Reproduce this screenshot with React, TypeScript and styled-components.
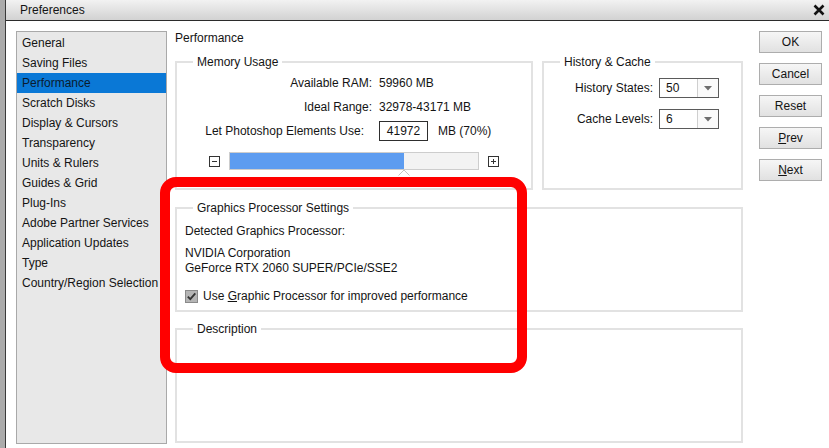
import React from "react";
import styled, { createGlobalStyle } from "styled-components";

const GlobalStyle = createGlobalStyle`
  html, body {
    margin: 0;
    padding: 0;
    background: #fff;
  }
  body {
    font-family: "Liberation Sans", Arial, sans-serif;
    font-size: 12px;
    color: #141414;
  }
  #root {
    width: 829px;
    height: 448px;
    overflow: hidden;
  }
`;

const Screen = styled.div`
  position: relative;
  display: flex;
  width: 829px;
  height: 448px;
  overflow: hidden;
`;

const WindowEdge = styled.div`
  flex: none;
  width: 5px;
  background: #ababab;
  border-right: 1px solid #3a3a3a;
`;

const Dialog = styled.div`
  flex: 1;
  display: flex;
  flex-direction: column;
  background: #fff;
`;

const TitleBar = styled.div`
  flex: none;
  height: 20px;
  display: flex;
  align-items: center;
  justify-content: space-between;
  padding: 0 4px 0 14px;
  background: linear-gradient(#f2f2f2, #d2d2d2);
  border-bottom: 1px solid #2b2b2b;
  line-height: 14px;
`;

const Body = styled.div`
  flex: 1;
  display: flex;
  align-items: flex-start;
  padding: 10px 0 0 10px;
`;

const CategoryList = styled.ul`
  flex: none;
  box-sizing: border-box;
  width: 151px;
  height: 413px;
  margin: 0 8px 0 0;
  padding: 1px 0 0;
  list-style: none;
  background: #e8e8e8;
  border: 1px solid #a9a9a9;
  overflow: hidden;
`;

const CategoryItem = styled.li<{ $active?: boolean }>`
  height: 20px;
  line-height: 20px;
  padding-left: 5px;
  white-space: nowrap;
  background: ${(p) => (p.$active ? "#0a78d6" : "transparent")};
  color: ${(p) => (p.$active ? "#0b1b2e" : "#141414")};
`;

const Content = styled.div`
  flex: none;
  width: 568px;
  margin-right: 16px;
  display: flex;
  flex-direction: column;
`;

const PageTitle = styled.div`
  line-height: 14px;
  height: 14px;
`;

const TopRow = styled.div`
  display: flex;
  gap: 9px;
  margin-top: 10px;
`;

const GroupBox = styled.fieldset<{ $width?: number; $height: number; $gap?: number }>`
  box-sizing: border-box;
  margin: ${(p) => p.$gap ?? 0}px 0 0;
  padding: 0;
  min-width: 0;
  width: ${(p) => (p.$width ? `${p.$width}px` : "100%")};
  height: ${(p) => p.$height}px;
  border: 2px solid #e2e2e2;
`;

const Legend = styled.legend`
  margin-left: 16px;
  padding: 0 4px;
  line-height: 14px;
`;

const MemoryInner = styled.div`
  padding-top: 4px;
`;

const InfoGrid = styled.div`
  display: grid;
  grid-template-columns: 195px 1fr;
  grid-auto-rows: 20px;
  column-gap: 7px;
  row-gap: 4px;
  align-items: center;
`;

const InfoLabel = styled.div<{ $inset?: number }>`
  text-align: right;
  padding-right: ${(p) => p.$inset ?? 0}px;
  white-space: nowrap;
`;

const InfoValue = styled.div`
  display: flex;
  align-items: center;
  gap: 10px;
  white-space: nowrap;
`;

const NumberBox = styled.div`
  box-sizing: border-box;
  width: 49px;
  height: 20px;
  line-height: 18px;
  text-align: center;
  border: 1px solid #2e2e2e;
  background: #fff;
`;

const SliderRow = styled.div`
  display: flex;
  align-items: center;
  justify-content: center;
  gap: 9px;
  margin-top: 11px;
`;

const SliderTrack = styled.div`
  position: relative;
  box-sizing: border-box;
  width: 250px;
  height: 18px;
  background: #f3f3f3;
  border: 1px solid #cdcdcd;
`;

const SliderFill = styled.div`
  height: 100%;
  background: #5d9cf0;
`;

const SliderCaret = styled.svg`
  position: absolute;
  top: 100%;
  margin-left: -6px;
`;

const HistoryInner = styled.div`
  display: grid;
  grid-template-columns: 109px 60px;
  grid-auto-rows: 20px;
  column-gap: 6px;
  row-gap: 11px;
  align-items: center;
  padding-top: 9px;
`;

const Dropdown = styled.div`
  box-sizing: border-box;
  display: flex;
  height: 20px;
  border: 1px solid #5a5a5a;
  background: #fff;
`;

const DropdownValue = styled.div`
  flex: 1;
  line-height: 18px;
  padding-left: 6px;
`;

const DropdownArrow = styled.div`
  width: 20px;
  display: flex;
  align-items: center;
  justify-content: center;
  border-left: 1px solid #cfcfcf;
  background: #fafafa;
`;

const GpuInner = styled.div`
  padding: 9px 8px 0;
`;

const GpuLine = styled.div`
  line-height: 14px;
`;

const GpuName = styled.div`
  margin-top: 8px;
  line-height: 15px;
`;

const CheckRow = styled.label`
  display: flex;
  align-items: center;
  gap: 5px;
  margin-top: 13px;
  height: 14px;
`;

const ButtonColumn = styled.div`
  flex: none;
  display: flex;
  flex-direction: column;
  gap: 10px;
`;

const DialogButton = styled.button`
  box-sizing: border-box;
  width: 63px;
  height: 22px;
  padding: 0;
  font: inherit;
  color: #141414;
  background: linear-gradient(#f6f6f6, #e1e1e1);
  border: 1px solid #adadad;
  border-radius: 0;
`;

const Highlight = styled.div`
  position: absolute;
  left: 160px;
  top: 177px;
  width: 367px;
  height: 196px;
  box-sizing: border-box;
  border: 10px solid #ff0000;
  border-radius: 16px;
  pointer-events: none;
`;

const categories = [
  "General",
  "Saving Files",
  "Performance",
  "Scratch Disks",
  "Display & Cursors",
  "Transparency",
  "Units & Rulers",
  "Guides & Grid",
  "Plug-Ins",
  "Adobe Partner Services",
  "Application Updates",
  "Type",
  "Country/Region Selection",
];

const StepIcon = ({ plus }: { plus?: boolean }) => (
  <svg width="11" height="11" viewBox="0 0 11 11">
    <rect x="0.5" y="0.5" width="10" height="10" fill="#fff" stroke="#333" />
    <line x1="3" y1="5.5" x2="8" y2="5.5" stroke="#333" />
    {plus && <line x1="5.5" y1="3" x2="5.5" y2="8" stroke="#333" />}
  </svg>
);

const ArrowDown = () => (
  <svg width="8" height="5" viewBox="0 0 8 5">
    <path d="M0 0H8L4 4.5Z" fill="#6e6e6e" />
  </svg>
);

const CloseIcon = () => (
  <svg width="12" height="12" viewBox="0 0 12 12">
    <path d="M1.5 1.5L10.5 10.5M10.5 1.5L1.5 10.5" stroke="#111" strokeWidth="2.6" />
  </svg>
);

const CheckIcon = () => (
  <svg width="13" height="13" viewBox="0 0 13 13">
    <rect x="0.5" y="0.5" width="12" height="12" fill="#b5b5b5" stroke="#8a8a8a" />
    <path d="M2.8 6.6L5.3 9.2L10.3 3.4" fill="none" stroke="#333" strokeWidth="1.8" />
  </svg>
);

const memoryPercent = 70;

export default function App() {
  return (
    <>
      <GlobalStyle />
      <Screen>
        <WindowEdge />
        <Dialog>
          <TitleBar>
            <span>Preferences</span>
            <CloseIcon />
          </TitleBar>
          <Body>
            <CategoryList>
              {categories.map((c) => (
                <CategoryItem key={c} $active={c === "Performance"}>
                  {c}
                </CategoryItem>
              ))}
            </CategoryList>

            <Content>
              <PageTitle>Performance</PageTitle>
              <TopRow>
                <GroupBox $width={358} $height={135}>
                  <Legend>Memory Usage</Legend>
                  <MemoryInner>
                    <InfoGrid>
                      <InfoLabel>Available RAM:</InfoLabel>
                      <InfoValue>59960 MB</InfoValue>
                      <InfoLabel>Ideal Range:</InfoLabel>
                      <InfoValue>32978-43171 MB</InfoValue>
                      <InfoLabel $inset={8}>Let Photoshop Elements Use:</InfoLabel>
                      <InfoValue>
                        <NumberBox>41972</NumberBox>
                        <span>MB (70%)</span>
                      </InfoValue>
                    </InfoGrid>
                    <SliderRow>
                      <StepIcon />
                      <SliderTrack>
                        <SliderFill style={{ width: `${memoryPercent}%` }} />
                        <SliderCaret
                          width="12"
                          height="7"
                          viewBox="0 0 12 7"
                          style={{ left: `${memoryPercent}%` }}
                        >
                          <path d="M0.5 6.5L6 1L11.5 6.5" fill="none" stroke="#c4c4c4" />
                        </SliderCaret>
                      </SliderTrack>
                      <StepIcon plus />
                    </SliderRow>
                  </MemoryInner>
                </GroupBox>

                <GroupBox $width={201} $height={135}>
                  <Legend>History &amp; Cache</Legend>
                  <HistoryInner>
                    <InfoLabel>History States:</InfoLabel>
                    <Dropdown>
                      <DropdownValue>50</DropdownValue>
                      <DropdownArrow>
                        <ArrowDown />
                      </DropdownArrow>
                    </Dropdown>
                    <InfoLabel>Cache Levels:</InfoLabel>
                    <Dropdown>
                      <DropdownValue>6</DropdownValue>
                      <DropdownArrow>
                        <ArrowDown />
                      </DropdownArrow>
                    </Dropdown>
                  </HistoryInner>
                </GroupBox>
              </TopRow>

              <GroupBox $height={111} $gap={11}>
                <Legend>Graphics Processor Settings</Legend>
                <GpuInner>
                  <GpuLine>Detected Graphics Processor:</GpuLine>
                  <GpuName>
                    NVIDIA Corporation
                    <br />
                    GeForce RTX 2060 SUPER/PCIe/SSE2
                  </GpuName>
                  <CheckRow>
                    <CheckIcon />
                    <span>
                      Use <u>G</u>raphic Processor for improved performance
                    </span>
                  </CheckRow>
                </GpuInner>
              </GroupBox>

              <GroupBox $height={121} $gap={10}>
                <Legend>Description</Legend>
              </GroupBox>
            </Content>

            <ButtonColumn>
              <DialogButton>OK</DialogButton>
              <DialogButton>Cancel</DialogButton>
              <DialogButton>Reset</DialogButton>
              <DialogButton>
                <u>P</u>rev
              </DialogButton>
              <DialogButton>
                <u>N</u>ext
              </DialogButton>
            </ButtonColumn>
          </Body>
        </Dialog>
        <Highlight />
      </Screen>
    </>
  );
}
